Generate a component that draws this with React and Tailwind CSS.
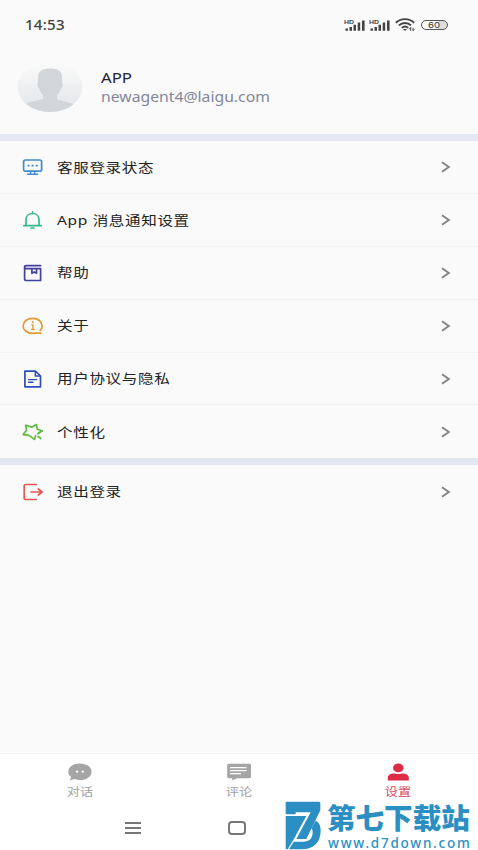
import clsx from "clsx";

const ROWS = [
  { icon: IconMonitor, label: "客服登录状态" },
  { icon: IconBell, label: "App 消息通知设置" },
  { icon: IconBook, label: "帮助" },
  { icon: IconInfo, label: "关于" },
  { icon: IconDoc, label: "用户协议与隐私" },
  { icon: IconStar, label: "个性化" },
];

const TABS = [
  { icon: IconChat, label: "对话" },
  { icon: IconComment, label: "评论" },
  { icon: IconUser, label: "设置", active: true },
];

// Menu icons: 22x18 box
function Icon({ className, children }) {
  return (
    <svg
      viewBox="0 0 22 18"
      className={clsx("h-[18px] w-[22px] shrink-0", className)}
      fill="none"
      stroke="currentColor"
      strokeWidth="1.7"
      strokeLinecap="round"
      strokeLinejoin="round"
    >
      {children}
    </svg>
  );
}

function IconMonitor() {
  return (
    <Icon className="text-[#4389d0]">
      <rect x="1.6" y="2" width="18" height="11.2" rx="1.8" />
      <path d="M8.6 13.5v2.5M12.6 13.5v2.5M5.5 16.2h10.2" strokeWidth="1.4" />
      <path d="M6.2 7.7h.6M10.3 7.7h.6M14.4 7.7h.6" />
    </Icon>
  );
}

function IconBell() {
  return (
    <Icon className="text-[#35b78c]">
      <path d="M10.5.9v1.4M1.8 14.7h17.4M9 17h3" />
      <path d="M4 14.3V8.7c0-3.6 2.7-6.2 6.5-6.2S17 5.1 17 8.7v5.6" />
    </Icon>
  );
}

function IconBook() {
  return (
    <Icon className="text-[#42409d]">
      <path d="M18.6 1.7H4.4c-1.2 0-1.8.6-1.8 1.4v11.6c0 1 .7 1.8 1.8 1.8h14.2V4.7H4.2c-1.1 0-1.6-.7-1.6-1.6" />
      <path d="M9.9 4.9v4.4l2.3-1.3 2.3 1.3V4.9" />
    </Icon>
  );
}

function IconInfo() {
  return (
    <Icon className="text-[#e59a35]">
      <path d="M18.1 13.7c1.3-1.3 2-3 2-4.8 0-4.2-4.2-7.6-9.5-7.6S1.1 4.7 1.1 8.9s4.2 7.5 9.5 7.5c.9 0 1.8-.1 2.7-.3h5.6" />
      <path d="M9.900 7.900h1v4.400M9.600 12.500h2.600" strokeWidth="1.4" />
      <path d="M10.700 5.200h.1" strokeWidth="2" />
    </Icon>
  );
}

function IconDoc() {
  return (
    <Icon className="text-[#2e4fb5]">
      <path d="M2.900 1.200h10.600l5 4.800v10.800H2.900z" />
      <path d="M13.300 1.400V6h5M6.500 9.600h8.200M6.500 12.200h4.500" strokeWidth="1.4" />
    </Icon>
  );
}

function IconStar() {
  return (
    <Icon className="text-[#5dbb40]">
      <path d="M16.800 9.900l3.400-2.100-5-1.600L14.400 1.500 10 4.100 3.600 2.200l1 4.900-3.400 4.500 5.900.8 5.300 4 1.200-3.700" />
      <path d="M20.200 7.800l-4.400 3M16 13.300l2.700 2.200" />
    </Icon>
  );
}

function IconExit() {
  return (
    <Icon className="text-[#e45757]">
      <path d="M14.300 1.500H4.100c-1.200 0-1.900.7-1.900 1.600v11.800c0 .9.700 1.600 1.900 1.600h10.200" />
      <path d="M9 9h11M16.300 6l3.800 3-3.800 3" />
    </Icon>
  );
}

function IconChat() {
  return (
    <svg viewBox="0 0 24 18" className="h-[18px] w-6" fill="#a5a5a5">
      <path d="M12 .5C5.500.5.300 4 .300 8.700c0 2.300 1.200 4.100 3 5.500L1.600 17.400l5-1.300c1.600.6 3.400.9 5.400.9 6.500 0 11.600-3.700 11.600-8.300S18.500.5 12 .5z" />
      <circle cx="9" cy="8.600" r="1.200" fill="#fff" />
      <circle cx="14.800" cy="8.600" r="1.200" fill="#fff" />
    </svg>
  );
}

function IconComment() {
  return (
    <svg viewBox="0 0 24 18" className="h-[18px] w-6" fill="#a5a5a5">
      <path d="M1.800.8h20.600c1 0 1.600.6 1.600 1.400v11.600c0 .8-.6 1.400-1.600 1.400H10l-4.800 2.300v-2.300H1.800c-1 0-1.600-.6-1.600-1.400V2.200C.2 1.400.8.8 1.800.8z" />
      <path d="M3 4.700h16.500M3 7.700h16.500M3 10.700h11" stroke="#fff" strokeWidth="1.300" />
    </svg>
  );
}

function IconUser() {
  return (
    <svg viewBox="0 0 24 18" className="h-[18px] w-6" fill="#df2b46">
      <ellipse cx="12.300" cy="4.800" rx="5.300" ry="4.400" />
      <path d="M1.800 17.400v-2.700c0-2.900 3-4.300 6-4.300 1.600 0 2.400.6 4.500.6s2.900-.6 4.500-.6c3 0 6 1.400 6 4.300v2.700z" />
    </svg>
  );
}

function SignalBars() {
  return (
    <svg viewBox="0 0 22 13" className="h-[13px] w-[22px]" fill="#444">
      <text x="0" y="5" fontSize="6" fontWeight="700" fontFamily="Liberation Sans, sans-serif" textLength="10" lengthAdjust="spacingAndGlyphs">
        HD
      </text>
      <path d="M1.500 9.500H4V11.700H1.500zM5.500 8H8v3.700H5.500zM9.500 5.800H12v5.900H9.500zM13.700 3.600h2.500v8.100h-2.500zM18 1.600h2.600v10.100H18z" />
    </svg>
  );
}

function StatusBar() {
  return (
    <div className="flex h-[50px] items-center justify-between pr-[30px] pl-[25px]">
      <span className="origin-left scale-x-[1.12] font-['Noto_Sans','Inter',sans-serif] text-[13.5px] font-medium tracking-[0.2px] text-[#404040]">
        14:53
      </span>
      <div className="flex items-center">
        <div className="flex gap-[3px]">
          <SignalBars />
          <SignalBars />
        </div>
        <svg viewBox="0 0 20 14" className="ml-[4px] h-3.5 w-5" fill="none" stroke="#444" strokeWidth="1.9">
          <path d="M.8 4.800C6-.1 14-.1 19.200 4.800M3.900 7.400c3.500-3.200 8.700-3.200 12.200 0M6.800 9.900c1.900-1.700 4.500-1.700 6.400 0" />
          <path d="M8 11.100h4l-2 1.900z" fill="#444" stroke="none" />
          <path d="M14 11.300l1.700-1.800v3.300M18 9.700v3.100l1.500-1.600" strokeWidth="1" />
        </svg>
        <div className="ml-[6px] flex h-[10px] w-[27px] items-center rounded-full border border-[#555] bg-linear-to-r from-[#fafafa] from-65% to-[#ddd] to-65% pl-[6px]">
          <span className="origin-left scale-x-[1.2] font-['Inter',sans-serif] text-[8px] leading-none text-[#333]">60</span>
        </div>
      </div>
    </div>
  );
}

function Avatar() {
  return (
    <svg viewBox="0 0 66 50" className="h-[50px] w-[66px] shrink-0">
      <defs>
        <linearGradient id="face" x1="0" y1="0" x2="0" y2="1">
          <stop offset="0" stopColor="#fafafa" />
          <stop offset="1" stopColor="#e2e5e8" />
        </linearGradient>
        <clipPath id="oval">
          <ellipse cx="33" cy="25" rx="32.5" ry="25" />
        </clipPath>
      </defs>
      <g clipPath="url(#oval)">
        <rect width="66" height="50" fill="url(#face)" />
        <path
          d="M33 6.500c7.500 0 11.800 2.500 12 8.500.1 2.300 0 4 .2 6 .7.2.8 1.300.3 3-.4 1.600-1 2.400-1.800 2.600-.5 2.800-1.700 5-3.700 6.700v3.200c1 1.900 4.500 2 8 2.900 5 1.300 9 2.600 12 5.100V50H6v-6c3-2.500 7-3.800 12-5.100 3.500-.9 7-1 8-2.900v-2.700c-2-1.700-3.200-3.900-3.700-6.700-.8-.2-1.400-1-1.800-2.600-.5-1.700-.4-2.800.3-3 .2-2 0-3.700.2-6 .2-6 4.500-8.500 12-8.500z"
          fill="#d2d6d9"
        />
      </g>
    </svg>
  );
}

function Profile() {
  return (
    <div className="flex h-[84px] items-start pt-[12px] pl-[17px]">
      <Avatar />
      <div className="ml-[18px] pt-[7px] font-['Noto_Sans',sans-serif]">
        <p className="origin-left scale-x-[1.24] text-[13.5px] leading-[19px] text-[#23233b]">APP</p>
        <p className="origin-left scale-x-[1.165] text-[13.5px] leading-[19px] whitespace-nowrap text-[#83879a]">
          newagent4@laigu.com
        </p>
      </div>
    </div>
  );
}

function Row({ icon: RowIcon, label, last }) {
  return (
    <div
      className={clsx(
        "flex h-[52.9px] shrink-0 items-center pr-[27px] pl-[22px]",
        !last && "border-b border-[#f3f3f4]"
      )}
    >
      <RowIcon />
      <span className="ml-[13px] origin-left scale-x-[1.22] pt-[0.5px] font-['Noto_Sans','Noto_Sans_CJK_SC',sans-serif] text-[12.75px] tracking-[0.52px] whitespace-nowrap text-[#222]">
        {label}
      </span>
      <svg viewBox="0 0 10 12" className="ml-auto h-3 w-2.5" fill="none" stroke="#858585" strokeWidth="2">
        <path d="M1 1.200l6.800 4.800-6.800 4.800" />
      </svg>
    </div>
  );
}

function Watermark() {
  return (
    <div className="absolute right-0 bottom-0 flex h-[49px] w-[193px] text-[#2b8fc3]">
      <svg viewBox="6 5 108 147" className="h-[49px] w-9 shrink-0" fill="currentColor">
        <path d="M8 7h101l3 3v23L70 119H40l43-80H38v6H8z" />
        <path d="M8 50h62L34 117 14 150H8z" />
        <path d="M98 64c11 6 15 16 15 29 0 37-21 57-57 57H18l14-23h28c20 0 29-10 29-28 0-5-1-9-4-12z" />
      </svg>
      <div className="ml-[6px] w-[145px]">
        <p className="h-[31px] origin-left scale-x-[1.02] font-['Noto_Sans_CJK_SC',sans-serif] text-[28px] leading-[33px] font-black whitespace-nowrap">
          第七下载站
        </p>
        <p className="pt-px pl-px font-['Noto_Sans',sans-serif] text-[13.5px] leading-[20px] font-medium tracking-[1.75px] whitespace-nowrap">
          www.d7down.com
        </p>
      </div>
    </div>
  );
}

export default function App() {
  return (
    <div className="relative flex h-[850px] w-[478px] flex-col overflow-hidden bg-[#fafafa]">
      <StatusBar />
      <Profile />
      <div className="h-[7px] shrink-0 bg-[#e4e8f1]" />
      {ROWS.map((row, i) => (
        <Row key={row.label} {...row} last={i === ROWS.length - 1} />
      ))}
      <div className="h-[7px] shrink-0 bg-[#e4e8f1]" />
      <Row icon={IconExit} label="退出登录" last />

      <div className="mt-auto h-[97px] border-t border-[#f3f3f3] bg-white">
        <div className="grid h-[48px] grid-cols-3 pt-[9px]">
          {TABS.map(({ icon: TabIcon, label, active }) => (
            <div key={label} className="flex flex-col items-center">
              <TabIcon />
              <span
                className={clsx(
                  "scale-x-[1.2] font-['Noto_Sans_CJK_SC',sans-serif] text-[11px] leading-[20px]",
                  active ? "text-[#d94a60]" : "text-[#a2a2a2]"
                )}
              >
                {label}
              </span>
            </div>
          ))}
        </div>
        {/* system navigation */}
        <div className="flex h-[48px] items-center pt-[4px] pl-[125px]">
          <div className="flex w-4 flex-col gap-[3px]">
            <span className="h-0.5 bg-[#777]" />
            <span className="h-0.5 bg-[#777]" />
            <span className="h-0.5 bg-[#777]" />
          </div>
          <div className="ml-[87px] h-[14px] w-[18px] rounded-[4px] border-2 border-[#777]" />
        </div>
      </div>

      <Watermark />
    </div>
  );
}
